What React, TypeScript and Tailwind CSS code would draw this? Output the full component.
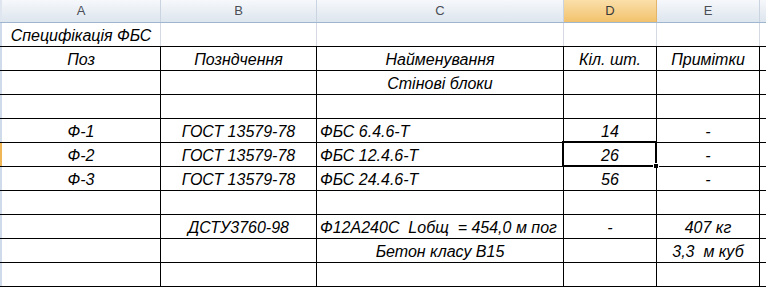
import React from "react";

type Cell = { text?: string; align?: "c" | "l" };
type Row = { cells: Cell[]; light?: boolean; selected?: boolean };

const widths = ["w-[159px]", "w-[156px]", "w-[247px]", "w-[93px]", "w-[103px]"];
const letters = ["A", "B", "C", "D", "E"];

const rows: Row[] = [
  { light: true, cells: [{ text: "Специфікація ФБС" }, {}, {}, {}, {}] },
  { cells: [{ text: "Поз" }, { text: "Позндчення" }, { text: "Найменування" }, { text: "Кіл. шт." }, { text: "Примітки" }] },
  { cells: [{}, {}, { text: "Стінові блоки" }, {}, {}] },
  { cells: [{}, {}, {}, {}, {}] },
  { cells: [{ text: "Ф-1" }, { text: "ГОСТ 13579-78" }, { text: "ФБС 6.4.6-Т", align: "l" }, { text: "14" }, { text: "-" }] },
  { selected: true, cells: [{ text: "Ф-2" }, { text: "ГОСТ 13579-78" }, { text: "ФБС 12.4.6-Т", align: "l" }, { text: "26" }, { text: "-" }] },
  { cells: [{ text: "Ф-3" }, { text: "ГОСТ 13579-78" }, { text: "ФБС 24.4.6-Т", align: "l" }, { text: "56" }, { text: "-" }] },
  { cells: [{}, {}, {}, {}, {}] },
  { cells: [{}, { text: "ДСТУ3760-98" }, { text: "Ф12А240С  Lобщ  = 454,0 м пог", align: "l" }, { text: "-" }, { text: "407 кг" }] },
  { cells: [{}, {}, { text: "Бетон класу В15" }, {}, { text: "3,3  м куб" }] },
  { cells: [{}, {}, {}, {}, {}] },
];

export default function App() {
  return (
    <div className="h-[290px] w-[766px] overflow-hidden bg-white font-['Liberation_Sans',Arial,sans-serif]">
      <HeaderRow />
      {rows.map((row, i) => (
        <SheetRow key={i} row={row} />
      ))}
    </div>
  );
}

function HeaderRow() {
  return (
    <div className="flex h-[23px] border-b border-[#9eb6ce]">
      <div className="w-[2px] bg-[#dfe6ef]" />
      {letters.map((l, i) =>
        l === "D" ? (
          <div key={l} className={`${widths[i]} flex items-center justify-center border-r border-[#e3b56a] bg-linear-to-b from-[#fadfa9] to-[#f2c26c] text-[13px] text-[#3a3a3a]`}>
            {l}
          </div>
        ) : (
          <div key={l} className={`${widths[i]} flex items-center justify-center border-r border-[#c9d4e0] bg-linear-to-b from-[#f6f8fb] to-[#dde5ee] text-[13px] text-[#4a4f57]`}>
            {l}
          </div>
        )
      )}
      <div className="flex-1 bg-linear-to-b from-[#f6f8fb] to-[#dde5ee]" />
    </div>
  );
}

function SheetRow({ row }: { row: Row }) {
  const line = row.light ? "border-r-[#d4d9e2]" : "border-r-black";
  return (
    <div className="flex h-[24px] border-b border-black">
      <div className={row.selected ? "w-[2px] bg-[#f0b656]" : "w-[2px] bg-[#cfdbea]"} />
      {row.cells.map((c, i) => (
        <div
          key={i}
          className={`${widths[i]} relative flex items-end border-r ${line} pb-[1px] text-[16px] leading-[18px] italic text-black whitespace-pre ${c.align === "l" ? "justify-start pl-[3px]" : "justify-center"}`}
        >
          {c.text}
          {row.selected && i === 3 && (
            <div className="absolute -top-[2px] -left-[2px] -right-[1px] -bottom-[1px] border-2 border-black">
              <div className="absolute -right-[4px] -bottom-[4px] h-[6px] w-[6px] border border-white bg-black" />
            </div>
          )}
        </div>
      ))}
      <div className="flex-1" />
    </div>
  );
}
